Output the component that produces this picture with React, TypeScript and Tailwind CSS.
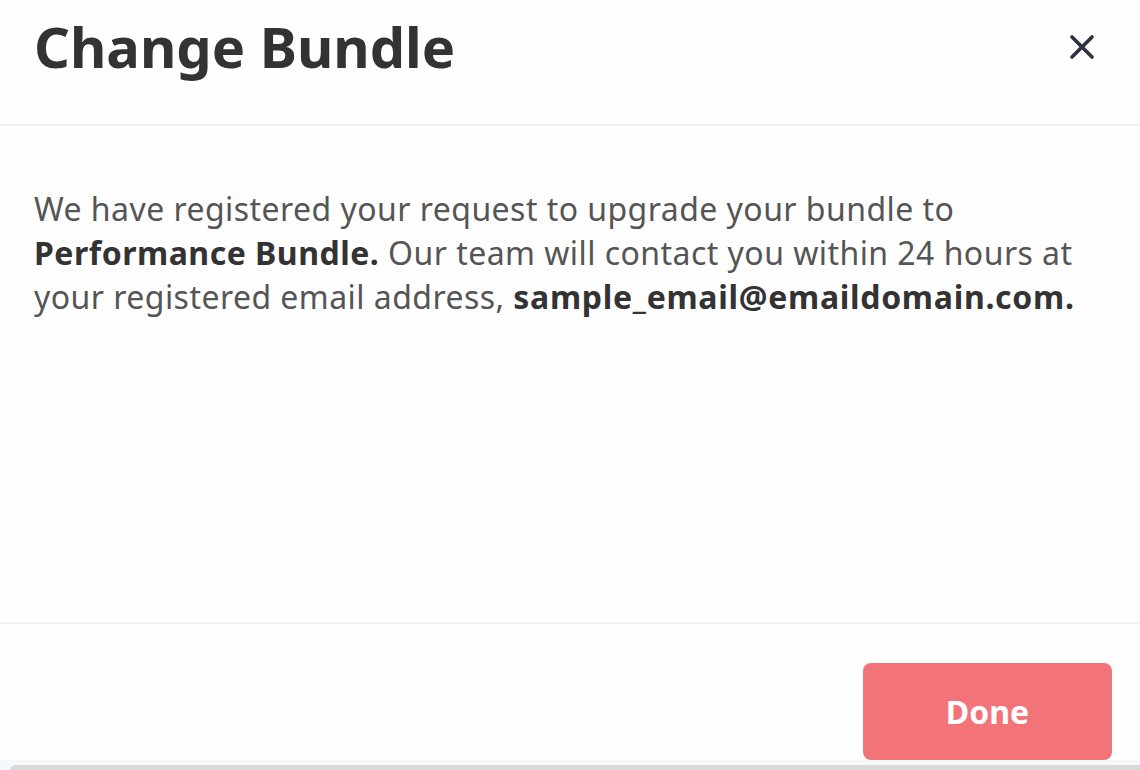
import { X } from 'lucide-react';

export default function App() {
  return (
    <div
      className="flex h-[770px] w-[1140px] flex-col overflow-hidden bg-[#fefefe] text-[#333333]"
      style={{ fontFamily: '"Noto Sans", "Open Sans", sans-serif' }}
    >
      <header className="flex h-[126px] shrink-0 items-start justify-between border-b-2 border-[#eff1f5] pl-[34px] pr-[38px]">
        <h1 className="mt-[6px] text-[56px] font-bold leading-[80px] text-[#333333]">
          Change Bundle
        </h1>
        <button className="mt-[27px] text-[#2d3142]" aria-label="Close">
          <X size={40} strokeWidth={2.2} />
        </button>
      </header>

      <main className="flex-1 px-[34px] pt-[61px]">
        <p className="text-[32px] leading-[44px] tracking-[0.45px] text-[#555555]">
          We have registered your request to upgrade your bundle to
          <br />
          <strong className="font-bold tracking-[0.5px] text-[#333333]">Performance Bundle.</strong> Our team will contact you within 24 hours at
          <br />
          your registered email address,{' '}
          <strong className="font-bold tracking-[0.7px] text-[#333333]">sample_email@emaildomain.com.</strong>
        </p>
      </main>

      <footer className="flex h-[148px] shrink-0 flex-col border-t-2 border-[#eff1f5]">
        <div className="flex flex-1 items-end justify-end pr-[28px]">
          <button className="flex h-[97px] w-[249px] items-center justify-center rounded-[8px] bg-[#f27479] text-[32px] font-bold text-white">
            Done
          </button>
        </div>
        <div className="h-[10px] bg-[#f7f8fa] pl-[10px] pt-[5px]">
          <div className="h-full rounded-tl-[6px] bg-[#d9d9d9]" />
        </div>
      </footer>
    </div>
  );
}
